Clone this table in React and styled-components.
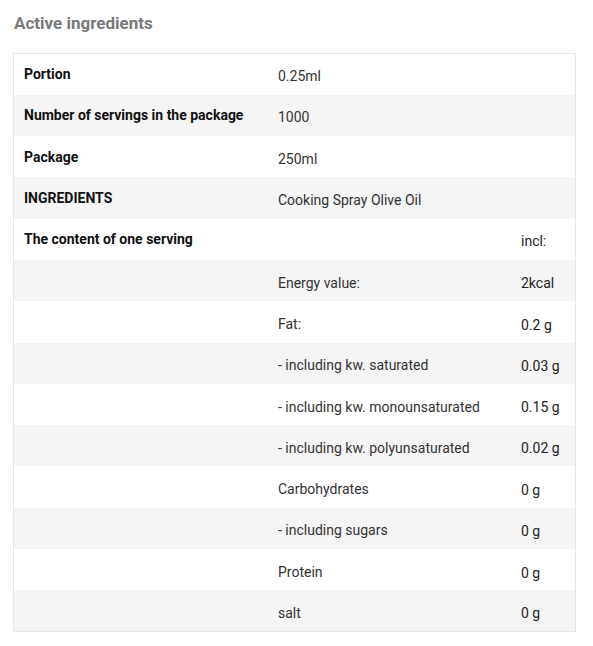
import styled, { createGlobalStyle } from 'styled-components';

const GlobalStyle = createGlobalStyle`
  body {
    margin: 0;
    background: #fff;
    font-family: Roboto, "Liberation Sans", sans-serif;
  }
`;

const Wrapper = styled.section`
  padding: 12px 17px 0 13px;
`;

const Title = styled.h3`
  margin: 0 0 19px 1px;
  font-size: 17px;
  font-weight: 700;
  color: #7a7a7a;
  line-height: 22px;
`;

const Table = styled.table`
  width: 100%;
  border-collapse: collapse;
  border: 1px solid #e6e6e6;
  font-size: 14px;
`;

const Row = styled.tr`
  background: ${props => (props.striped ? '#f5f5f5' : '#fff')};
  height: 41.3px;
`;

const Label = styled.td`
  width: 234px;
  padding: 1px 10px 1px 10px;
  font-weight: 700;
  color: #111;
  vertical-align: middle;
`;

const Value = styled.td`
  padding: 4px 10px 0 10px;
  color: #333;
  vertical-align: middle;
`;

const Amount = styled.td`
  width: 44px;
  padding: ${props => (props.low ? '6px 10px 0 10px' : '4px 10px 0 10px')};
  color: #222;
  white-space: nowrap;
  vertical-align: middle;
`;

const rows = [
  { label: 'Portion', value: '0.25ml', span: true },
  { label: 'Number of servings in the package', value: '1000', span: true },
  { label: 'Package', value: '250ml', span: true },
  { label: 'INGREDIENTS', value: 'Cooking Spray Olive Oil', span: true },
  { label: 'The content of one serving', value: '', amount: 'incl:' },
  { label: '', value: 'Energy value:', amount: '2kcal' },
  { label: '', value: 'Fat:', amount: '0.2 g', low: true },
  { label: '', value: '- including kw. saturated', amount: '0.03 g', low: true },
  { label: '', value: '- including kw. monounsaturated', amount: '0.15 g' },
  { label: '', value: '- including kw. polyunsaturated', amount: '0.02 g' },
  { label: '', value: 'Carbohydrates', amount: '0 g', low: true },
  { label: '', value: '- including sugars', amount: '0 g', low: true },
  { label: '', value: 'Protein', amount: '0 g', low: true },
  { label: '', value: 'salt', amount: '0 g' },
];

export default function App() {
  return (
    <Wrapper>
      <GlobalStyle />
      <Title>Active ingredients</Title>
      <Table>
        <tbody>
          {rows.map((row, i) => (
            <Row key={i} striped={i % 2 === 1}>
              <Label>{row.label}</Label>
              {row.span ? (
                <Value colSpan={2}>{row.value}</Value>
              ) : (
                <>
                  <Value>{row.value}</Value>
                  <Amount low={row.low}>{row.amount}</Amount>
                </>
              )}
            </Row>
          ))}
        </tbody>
      </Table>
    </Wrapper>
  );
}
